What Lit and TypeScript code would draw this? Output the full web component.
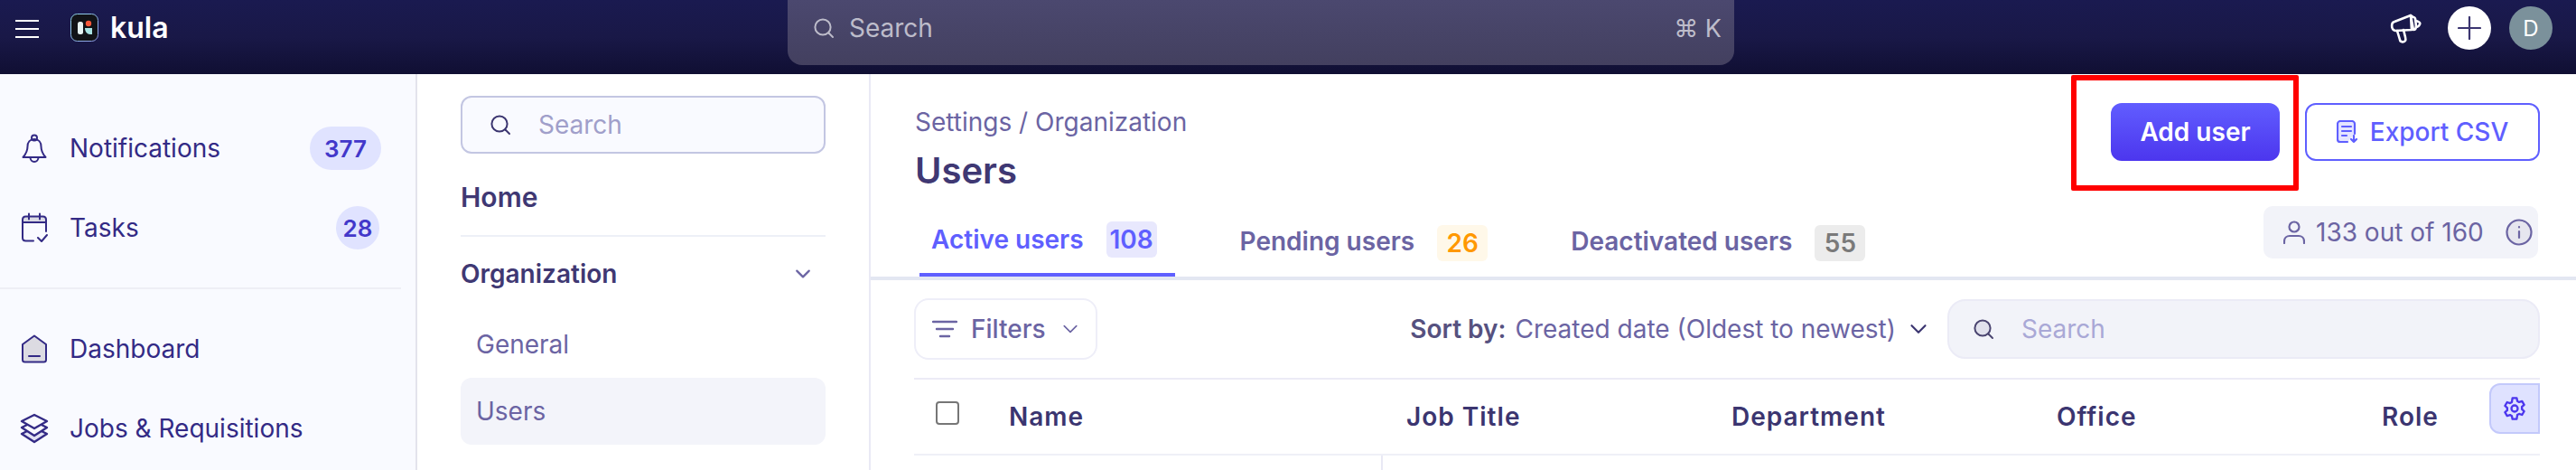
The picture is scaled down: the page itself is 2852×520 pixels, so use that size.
import { LitElement, html, css, svg } from "lit";
import { customElement } from "lit/decorators.js";

const searchIcon = (size: number, extra = "") => html`<svg class="ic ${extra}" width=${size} height=${size} viewBox="0 0 24 24" fill="none" stroke="currentColor" stroke-width="2" stroke-linecap="round"><circle cx="11" cy="11" r="8.6"/><path d="M17.5 17.5 22 22"/></svg>`;
const chevron = (w: number, sw = 2.2) => html`<svg class="ic" width=${w} height=${w} viewBox="0 0 24 24" fill="none" stroke="currentColor" stroke-width=${sw} stroke-linecap="round" stroke-linejoin="round"><path d="M3 7.5 12 16.5 21 7.5"/></svg>`;

@customElement("app-root")
export class AppRoot extends LitElement {
  static styles = css`
    :host { display: block; width: 2852px; height: 520px; overflow: hidden; position: relative; background: #fff;
      font-family: Inter, "Liberation Sans", sans-serif; font-size: 28px; color: #3b3570; }
    * { box-sizing: border-box; }
    .ic { display: block; flex: none; }

    .top { height: 82px; display: grid; grid-template-columns: 872px 1048px 1fr; background: linear-gradient(#1a1a50 0%, #191847 50%, #100f33 100%); }
    .brand { display: flex; align-items: flex-start; padding: 15px 0 0 17px; color: #fff; }
    .burger { width: 26px; height: 20px; margin: 7px 35px 0 0; display: flex; flex-direction: column; justify-content: space-between; }
    .burger i { display: block; height: 2.4px; background: #fff; }
    .logo { margin-right: 13px; }
    .kula { font-size: 32px; font-weight: 600; line-height: 32px; }
    .gsearch { height: 72px; border-radius: 0 0 16px 16px; background: linear-gradient(#4b486f, #43405f); display: flex; align-items: center; padding: 0 14px 10px 28px; color: #bdbcca; }
    .gsearch span { margin-left: 16px; flex: 1; }
    .gsearch kbd { font: inherit; font-size: 27px; }
    .tools { display: flex; align-items: flex-start; padding: 7px 26px 0 0; justify-content: flex-end; }
    .tools .mega { margin: 8px 29px 0 0; }
    .circle { width: 48px; height: 48px; border-radius: 50%; display: flex; align-items: center; justify-content: center; }
    .plus { background: #fff; color: #3b3570; margin-right: 20px; }
    .avatar { background: #7b919b; color: #fff; font-size: 24px; }

    .body { display: grid; grid-template-columns: 462px 502px 1fr; height: 438px; }

    .nav { background: #f9faff; border-right: 2px solid #e3e3ec; padding-top: 38px; }
    .nrow { height: 88px; display: flex; align-items: center; padding-left: 22px; color: #332a85; }
    .nrow .nic { width: 32px; margin-right: 23px; display: flex; justify-content: center; }
    .nrow .lbl { flex: 1; }
    .pill { height: 48px; min-width: 48px; padding: 0 16px; border-radius: 24px; background: #e0e3ff; color: #4338ca; font-size: 26px; font-weight: 600; display: flex; align-items: center; justify-content: center; margin-right: 38px; }
    .pill.short { padding: 0; margin-right: 40px; }
    .ndiv { height: 2px; width: 444px; background: #eeeef5; margin: 22px 0; }

    .sub { border-right: 2px solid #e9e9f5; padding: 24px 48px 0 48px; }
    .ssearch { height: 64px; border: 2px solid #c3c6e2; border-radius: 12px; background: #f9faff; display: flex; align-items: center; padding-left: 30px; color: #a09fca; }
    .ssearch .ic { color: #3b3570; margin-right: 30px; }
    .home { font-size: 30px; font-weight: 600; height: 92px; border-bottom: 2px solid #edf0f7; padding-top: 30px; line-height: 36px; color: #3f3873; }
    .orgh { height: 82px; display: flex; align-items: center; justify-content: space-between; font-weight: 600; color: #3f3873; padding-right: 16px; }
    .orgh .ic { color: #6b64a3; }
    .sitem { height: 74px; display: flex; align-items: center; padding-left: 17px; color: #6b64a3; border-radius: 12px; }
    .sitem.first { margin-bottom: 0; height: 74px; }
    .sitem.on { background: #f3f4fa; }

    .main { display: flex; flex-direction: column; min-width: 0; }
    .head { height: 146px; display: flex; justify-content: space-between; padding: 32px 40px 0 49px; }
    .crumb { color: #6b64a3; line-height: 42px; }
    .title { font-size: 40px; font-weight: 600; line-height: 48px; margin-top: 9px; color: #3f3873; }
    .btns { display: flex; gap: 28px; }
    .btn { height: 64px; border-radius: 12px; display: flex; align-items: center; justify-content: center; font-weight: 600; }
    .add { width: 187px; color: #fff; background: linear-gradient(#615dff, #4c36ee); }
    .exp { width: 260px; border: 2px solid #5f5fff; color: #5f5fff; font-weight: 500; gap: 13px; background: #fff; }

    .tabs { height: 82px; border-bottom: 4px solid #e3e7f2; display: flex; align-items: flex-start; padding: 0 42px 0 54px; }
    .tab { height: 78px; display: flex; align-items: center; padding: 0 20px 0 13px; font-weight: 600; color: #6b64a3; margin-right: 59px; gap: 25px; }
    .tab.on { color: #5f5fff; border-bottom: 4px solid #5f5fff; }
    .count { width: 56px; height: 40px; border-radius: 6px; display: flex; align-items: center; justify-content: center; font-size: 28px; font-weight: 600; margin-top: 4px; }
    .tab.on .count { background: #e8e8fd; margin-top: 0; }
    .count.amber { background: #fff8e9; color: #ff9800; }
    .count.gray { background: #ececec; color: #7a7a7a; }
    .chip { margin-left: auto; width: 304px; height: 58px; border-radius: 10px; background: #f2f3f9; display: flex; align-items: center; padding-left: 22px; color: #6b64a3; gap: 12px; }
    .chip .ci { margin-left: 12px; }

    .bar { height: 108px; padding: 20px 40px 0 48px; display: flex; align-items: flex-start; }
    .filters { width: 203px; height: 68px; border: 2px solid #eeeef8; border-radius: 16px; display: flex; align-items: center; padding-left: 18px; color: #6b64a3; font-weight: 500; gap: 15px; }
    .filters .ic:last-child { margin-left: 3px; }
    .sort { margin-left: auto; height: 68px; display: flex; align-items: center; color: #6b64a3; }
    .sort b { font-weight: 600; color: #56517f; margin-right: 10px; }
    .sort .ic { margin-left: 15px; color: #3b3570; }
    .tsearch { width: 656px; height: 66px; margin: 1px 0 0 22px; background: #f2f3f9; border: 2px solid #ebebf6; border-radius: 20px; display: flex; align-items: center; padding-left: 26px; color: #a9a8d6; }
    .tsearch .ic { color: #4a4470; margin-right: 30px; }
    .tsearch .ic circle { fill: #e0e0ec; }

    .table { margin: 0 40px 0 48px; border-top: 2px solid #ecebf6; }
    .thead { height: 84px; border-bottom: 2px solid #eff0f7; display: grid; grid-template-columns: 105px 440px 360px 360px 360px 119px 56px; align-items: center; font-weight: 600; color: #3b3570; letter-spacing: 1px; }
    .check { width: 26px; height: 26px; margin: 0 0 8px 24px; border: 2px solid #767676; border-radius: 4px; background: #fff; }
    .thead span { padding-top: 0; }
    .gear { width: 56px; height: 56px; align-self: start; margin-top: 4px; background: #dfe2ff; border: 2px solid #c3c9fb; border-radius: 12px 0 0 12px; display: flex; align-items: center; justify-content: center; color: #4c36ee; }
    .trow { height: 16px; width: 519px; border-right: 2px solid #e9e9f5; }

    .mark { position: absolute; left: 2293px; top: 83px; width: 252px; height: 128px; border: 6px solid #ff0000; border-radius: 2px; pointer-events: none; }
  `;

  render() {
    return html`
      <div class="top">
        <div class="brand">
          <div class="burger"><i></i><i></i><i></i></div>
          <svg class="ic logo" width="31" height="31" viewBox="0 0 31 31">
            <defs><linearGradient id="lb" x1="0" y1="0" x2="1" y2="1"><stop offset="0" stop-color="#8fd8e8"/><stop offset="1" stop-color="#8f9be8"/></linearGradient></defs>
            <rect x=".5" y=".5" width="30" height="30" rx="7" fill="#111317" stroke="url(#lb)"/>
            <rect x="8" y="9" width="6" height="14" rx="2.5" fill="#e6f3f3"/>
            <circle cx="20" cy="11" r="3.2" fill="#f4583a"/>
            <path d="M16 16h8v7h-2.5c-3 0-5.5-3-5.500-7z" fill="#a8e3e3"/>
          </svg>
          <span class="kula">kula</span>
        </div>
        <div class="gsearch">
          ${searchIcon(24)}
          <span>Search</span>
          <kbd>⌘ K</kbd>
        </div>
        <div class="tools">
          <svg class="ic mega" width="36" height="34" viewBox="0 0 36 34" fill="none" stroke="#fff" stroke-width="2.6" stroke-linejoin="round" stroke-linecap="round">
            <path d="M24 2 6 9c-4 1-4 9 1 10l18-1z"/>
            <path d="M27 4c1 0 2 1 2 2l1 8c0 2-1 4-3 4L24 2z"/>
            <path d="M30 8c3 1 5 2 4 4s-2 3-4 3"/>
            <path d="M9 19l3 10c.5 3 5 3 6 1 .6-1 .5-2 0-4l-2-8"/>
          </svg>
          <div class="circle plus">
            <svg class="ic" width="26" height="26" viewBox="0 0 26 26" stroke="currentColor" stroke-width="2.2" stroke-linecap="round"><path d="M13 1v24M1 13h24"/></svg>
          </div>
          <div class="circle avatar">D</div>
        </div>
      </div>

      <div class="body">
        <nav class="nav">
          <div class="nrow">
            <span class="nic"><svg class="ic" width="28" height="32" viewBox="0 0 28 32" fill="none" stroke="currentColor" stroke-width="2" stroke-linejoin="round" stroke-linecap="round"><circle cx="14" cy="4.500" r="3"/><path d="M14 6c-5 0-7.500 3.500-7.500 8 0 5-1.500 8-5 12h25c-3.500-4-5-7-5-12 0-4.500-2.500-8-7.500-8z"/><path d="M9.500 26c0 3 2 5 4.500 5s4.500-2 4.500-5"/></svg></span>
            <span class="lbl">Notifications</span><span class="pill">377</span>
          </div>
          <div class="nrow">
            <span class="nic"><svg class="ic" width="30" height="34" viewBox="0 0 30 34" fill="none" stroke="currentColor" stroke-width="2" stroke-linejoin="round" stroke-linecap="round"><path d="M2 11V8c0-2 1.500-3.500 3.500-3.500h19C26.500 4.500 28 6 28 8v3z" fill="#dadae4"/><path d="M2 11v17c0 2 1.500 3.500 3.500 3.500H14M28 11v10"/><path d="M9 1.500v6M21 1.500v6"/><path d="M19 28l4 4 6-7"/></svg></span>
            <span class="lbl">Tasks</span><span class="pill short">28</span>
          </div>
          <div class="ndiv"></div>
          <div class="nrow">
            <span class="nic"><svg class="ic" width="30" height="32" viewBox="0 0 30 32" fill="#dcdbe2" stroke="currentColor" stroke-width="2" stroke-linejoin="round" stroke-linecap="round"><path d="M15 1.500 2 11v17c0 1.500 1 2.500 2.500 2.500h21c1.500 0 2.500-1 2.500-2.500V11z"/><path d="M9 24h12"/></svg></span>
            <span class="lbl">Dashboard</span>
          </div>
          <div class="nrow">
            <span class="nic"><svg class="ic" width="34" height="34" viewBox="0 0 34 34" fill="none" stroke="currentColor" stroke-width="2.4" stroke-linejoin="round"><path d="M3 23l14-7 14 7-14 9z" fill="#e2e2f2"/><path d="M3 16l14-7 14 7-14 9z" fill="#f9faff"/><path d="M3 9l14-7 14 7-14 8z" fill="#f9faff"/></svg></span>
            <span class="lbl">Jobs &amp; Requisitions</span>
          </div>
        </nav>

        <aside class="sub">
          <div class="ssearch">${searchIcon(24)}<span>Search</span></div>
          <div class="home">Home</div>
          <div class="orgh"><span>Organization</span>${chevron(18, 3)}</div>
          <div class="sitem first">General</div>
          <div class="sitem on">Users</div>
        </aside>

        <main class="main">
          <div class="head">
            <div>
              <div class="crumb">Settings / Organization</div>
              <div class="title">Users</div>
            </div>
            <div class="btns">
              <div class="btn add">Add user</div>
              <div class="btn exp">
                <svg class="ic" width="24" height="26" viewBox="0 0 24 26" fill="none" stroke="currentColor" stroke-width="2.200" stroke-linecap="round" stroke-linejoin="round"><path d="M12 24H4c-1.500 0-3-1-3-3V4c0-1.500 1.500-3 3-3h13c1.500 0 3 1.500 3 3v11" fill="#e5e5ff"/><path d="M6 7h10M6 12h10M6 17h5"/><path d="M19 17v7M16 21l3 3 3-3"/></svg>
                Export CSV
              </div>
            </div>
          </div>

          <div class="tabs">
            <div class="tab on">Active users<span class="count">108</span></div>
            <div class="tab">Pending users<span class="count amber">26</span></div>
            <div class="tab">Deactivated users<span class="count gray">55</span></div>
            <div class="chip">
              <svg class="ic" width="24" height="26" viewBox="0 0 24 26" fill="none" stroke="currentColor" stroke-width="2.200" stroke-linecap="round"><circle cx="12" cy="7" r="5.500"/><path d="M1 25v-2c0-4 3-6 6-6h10c3 0 6 2 6 6v2"/></svg>
              <span>133 out of 160</span>
              <svg class="ic ci" width="30" height="30" viewBox="0 0 30 30" fill="#e6e6ef" stroke="currentColor" stroke-width="2.200" stroke-linecap="round"><circle cx="15" cy="15" r="13.500"/><path d="M15 14v7M15 9v.5"/></svg>
            </div>
          </div>

          <div class="bar">
            <div class="filters">
              <svg class="ic" width="28" height="20" viewBox="0 0 28 20" stroke="currentColor" stroke-width="2.400" stroke-linecap="round"><path d="M1 2h26M5 10h18M9 18h10"/></svg>
              <span>Filters</span>
              ${chevron(18)}
            </div>
            <div class="sort"><b>Sort by:</b> Created date (Oldest to newest)${chevron(20, 2.6)}</div>
            <div class="tsearch">${searchIcon(24)}<span>Search</span></div>
          </div>

          <div class="table">
            <div class="thead">
              <div class="check"></div>
              <span>Name</span><span>Job Title</span><span>Department</span><span>Office</span><span>Role</span>
              <div class="gear">
                <svg class="ic" width="28" height="28" viewBox="0 0 24 24" fill="none" stroke="currentColor" stroke-width="2" stroke-linejoin="round"><circle cx="12" cy="12" r="3"/><path d="M10 2h4l.6 2.900 1.700 1 2.800-.9 2 3.400-2.200 2 .1 1.100-.1 1.100 2.200 2-2 3.400-2.800-.9-1.700 1L14 22h-4l-.6-2.900-1.700-1-2.800.9-2-3.400 2.200-2-.1-1.100.1-1.100-2.200-2 2-3.400 2.800.9 1.700-1z"/></svg>
              </div>
            </div>
            <div class="trow"></div>
          </div>
        </main>
      </div>
      <div class="mark"></div>
    `;
  }
}
